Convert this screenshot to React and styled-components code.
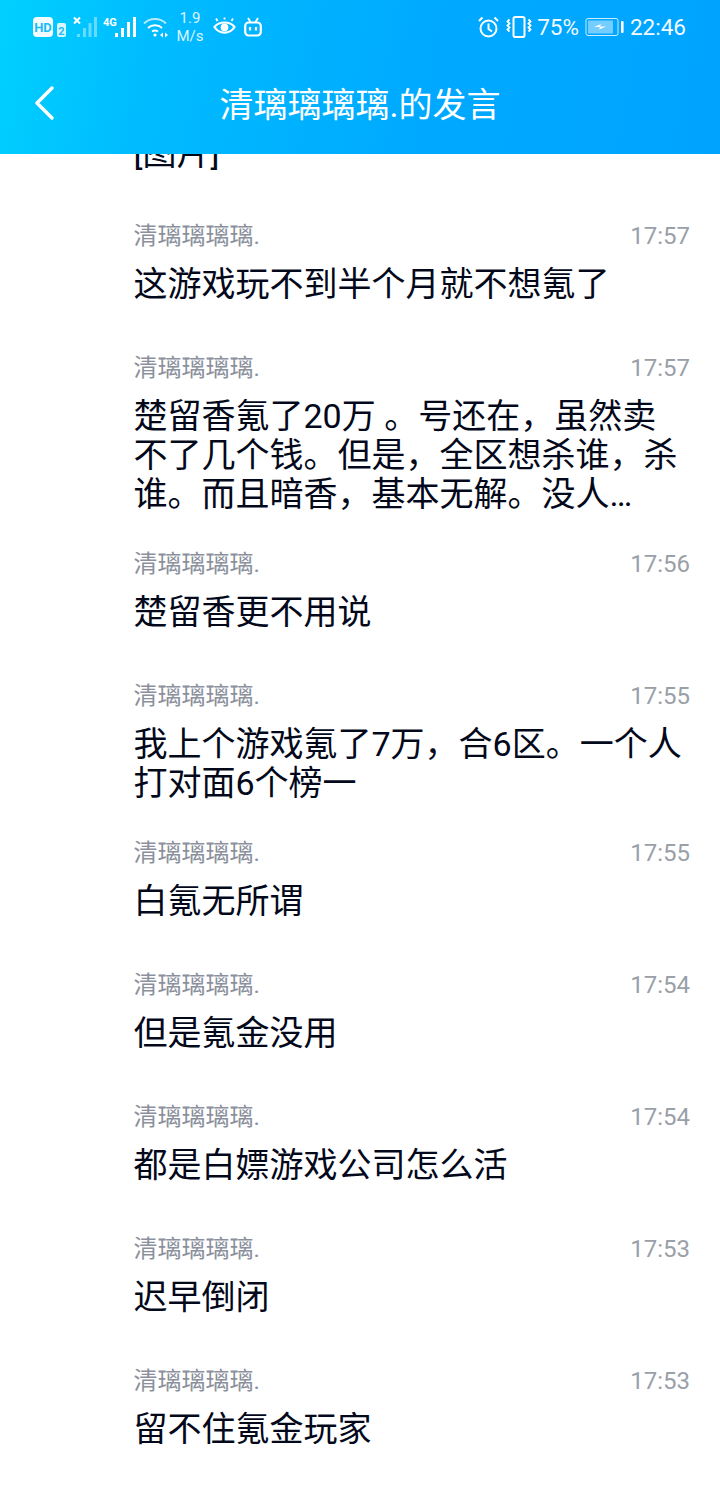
import React from 'react';
import styled, { createGlobalStyle } from 'styled-components';

const Global = createGlobalStyle`
  html, body { margin: 0; padding: 0; background: #fff; }
  body { font-family: "Roboto", "Noto Sans CJK SC", sans-serif; }
`

const Page = styled.div`
  width: 720px;
  height: 1493px;
  display: flex;
  flex-direction: column;
  overflow: hidden;
  background: #fff;
`

const Header = styled.header`
  flex: none;
  height: 154px;
  background: linear-gradient(100deg, #00d0ff 0%, #00bbff 22%, #00a9ff 60%, #00a4ff 100%);
  color: #fff;
`

const StatusBar = styled.div`
  height: 54px;
  padding: 0 34px 0 33px;
  display: flex;
  align-items: center;
  justify-content: space-between;
`

const StatusGroup = styled.div`
  display: flex;
  align-items: center;
`

const Speed = styled.div`
  width: 28px;
  margin: 0 9px 0 8px;
  font-size: 15px;
  line-height: 18px;
  text-align: center;
  opacity: .85;
`

const StatusText = styled.span`
  font-size: 22.5px;
  line-height: 28px;
  opacity: .95;
`

const NavBar = styled.div`
  height: 100px;
  display: grid;
  grid-template-columns: 1fr auto 1fr;
  align-items: center;
  padding: 0 33px;
`

const Title = styled.h1`
  margin: 2px 0 0;
  font-family: "Roboto", "Noto Sans CJK SC", sans-serif;
  font-size: 34px;
  font-weight: 400;
  line-height: 44px;
`

const List = styled.main`
  flex: 1;
  min-height: 0;
  display: flex;
  flex-direction: column;
  justify-content: flex-end;
  overflow: hidden;
  padding: 0 30px 5px 133.5px;
`

const Item = styled.article`
  flex: none;
  min-height: ${p => (p.$clipped ? 0 : 132)}px;
  box-sizing: border-box;
  padding: 5px 0 ${p => (p.$clipped ? 38 : 25)}px;
`

const Meta = styled.div`
  height: 34px;
  display: flex;
  align-items: center;
  justify-content: space-between;
`

const Name = styled.span`
  font-size: 24px;
  color: #8b909c;
`

const Time = styled.time`
  font-size: 24px;
  color: #9aa0a8;
  padding-top: 5px;
`

const Body = styled.p`
  margin: 15px 0 0;
  max-width: 550px;
  font-size: 34px;
  line-height: 39px;
  color: #03081a;
`

const messages = [
  { text: '[图片]' },
  { time: '17:57', text: '这游戏玩不到半个月就不想氪了' },
  { time: '17:57', text: '楚留香氪了20万 。号还在，虽然卖不了几个钱。但是，全区想杀谁，杀谁。而且暗香，基本无解。没人…' },
  { time: '17:56', text: '楚留香更不用说' },
  { time: '17:55', text: '我上个游戏氪了7万，合6区。一个人打对面6个榜一' },
  { time: '17:55', text: '白氪无所谓' },
  { time: '17:54', text: '但是氪金没用' },
  { time: '17:54', text: '都是白嫖游戏公司怎么活' },
  { time: '17:53', text: '迟早倒闭' },
  { time: '17:53', text: '留不住氪金玩家' },
]

const HdIcon = () => (
  <svg width="33" height="22" viewBox="0 0 33 22">
    <rect x="0" y="1" width="20" height="20" rx="4" fill="#fff" opacity=".95" />
    <text x="10" y="16" textAnchor="middle" fontSize="13" fontWeight="700" fill="#1cbcf8" fontFamily="Roboto">HD</text>
    <rect x="24" y="7" width="9" height="14" rx="2" fill="#fff" opacity=".85" />
    <text x="28.5" y="18.5" textAnchor="middle" fontSize="11" fontWeight="700" fill="#1cbcf8" fontFamily="Roboto">2</text>
  </svg>
)

const NoSignalIcon = () => (
  <svg width="24" height="22" viewBox="0 0 24 22">
    <path d="M1 1.5l6 6M7 1.5l-6 6" stroke="#fff" strokeWidth="2" />
    <g fill="#fff" opacity=".4">
      <rect x="4" y="18" width="3" height="3" />
      <rect x="10" y="12" width="3" height="9" />
      <rect x="15.5" y="7" width="3" height="14" />
      <rect x="21" y="1" width="3" height="20" />
    </g>
  </svg>
)

const SignalIcon = () => (
  <svg width="34" height="22" viewBox="0 0 34 22" fill="#fff">
    <text x="0" y="10" fontSize="11" fontWeight="700" fontFamily="Roboto">4G</text>
    <rect x="12" y="17" width="3" height="4" />
    <rect x="18" y="12" width="3" height="9" />
    <rect x="24" y="6" width="3" height="15" />
    <rect x="30" y="1" width="3" height="20" />
  </svg>
)

const WifiIcon = () => (
  <svg width="25" height="22" viewBox="0 0 25 22" fill="none" stroke="#fff" strokeWidth="2">
    <path d="M1 7.5C7 1.5 17 1.5 23 7.5" opacity=".7" />
    <path d="M5 12c4-3.6 10-3.6 14 0" />
    <path d="M9 15.5c2-1.4 4-1.4 6 0" />
    <circle cx="12" cy="19" r="1.6" fill="#fff" stroke="none" />
    <path d="M17 19l3-2.5v5zM25 19l-3-2.5v5z" fill="#fff" stroke="none" />
  </svg>
)

const EyeIcon = () => (
  <svg width="23" height="20" viewBox="0 0 23 20" fill="none" stroke="#fff" strokeWidth="2.2">
    <path d="M1.5 10C6 4 17 4 21.5 10C17 17.5 6 17.5 1.5 10Z" />
    <circle cx="11.5" cy="10.4" r="3.8" fill="#fff" stroke="none" />
    <path d="M4.5 4L3 1.5M11.5 2.5V.5M18.5 4L20 1.5" strokeWidth="1.8" />
  </svg>
)

const TvIcon = () => (
  <svg width="18" height="20" viewBox="0 0 18 20" fill="none" stroke="#fff" strokeWidth="2.2">
    <rect x="1.2" y="5.5" width="15.6" height="13" rx="3.5" />
    <path d="M4 1l2.5 4M14 1l-2.5 4" strokeWidth="1.8" />
    <path d="M6 10v3.5M12 10v3.5" />
  </svg>
)

const AlarmIcon = () => (
  <svg width="21" height="22" viewBox="0 0 21 22" fill="none" stroke="#fff" strokeWidth="2">
    <circle cx="10.5" cy="12.5" r="8" />
    <path d="M10.5 7.5v5.5l3.5 2.5" />
    <path d="M1 5l3.5-3.5M20 5l-3.5-3.5" />
  </svg>
)

const VibrateIcon = () => (
  <svg width="26" height="22" viewBox="0 0 26 22" fill="none" stroke="#fff" strokeWidth="2">
    <rect x="7.5" y="1" width="11" height="20" rx="1.8" />
    <path d="M3.5 3.5l-2 2 2 2-2 2 2 2-2 2 2 2M22.5 3.5l2 2-2 2 2 2-2 2 2 2-2 2" strokeWidth="1.8" />
  </svg>
)

const BatteryIcon = () => (
  <svg width="39" height="20" viewBox="0 0 39 20" fill="none">
    <rect x="1" y="1.5" width="32" height="17" rx="2" stroke="#fff" strokeWidth="1" opacity=".8" />
    <rect x="3" y="3.5" width="25" height="13" fill="#fff" opacity=".45" />
    <path d="M9 10l7-3-1 2.5h6l-7 3 1-2.5z" fill="#fff" />
    <rect x="36" y="4" width="2.6" height="12" rx="1" fill="#fff" />
  </svg>
)

const BackIcon = () => (
  <svg width="22" height="36" viewBox="0 0 22 36" fill="none" stroke="#fff" strokeWidth="3.4" strokeLinecap="round" strokeLinejoin="round">
    <path d="M19 2L4 17l15 15" />
  </svg>
)

const Gap = styled.span`
  display: inline-block;
  width: ${p => p.$w}px;
`

const App = () => (
  <Page>
    <Global />
    <Header>
      <StatusBar>
        <StatusGroup>
          <HdIcon />
          <Gap $w={7} />
          <NoSignalIcon />
          <Gap $w={6} />
          <SignalIcon />
          <Gap $w={6} />
          <WifiIcon />
          <Speed>1.9<br />M/s</Speed>
          <EyeIcon />
          <Gap $w={8} />
          <TvIcon />
        </StatusGroup>
        <StatusGroup>
          <AlarmIcon />
          <Gap $w={7} />
          <VibrateIcon />
          <Gap $w={5} />
          <StatusText>75%</StatusText>
          <Gap $w={6} />
          <BatteryIcon />
          <Gap $w={6} />
          <StatusText>22:46</StatusText>
        </StatusGroup>
      </StatusBar>
      <NavBar>
        <BackIcon />
        <Title>清璃璃璃璃.的发言</Title>
      </NavBar>
    </Header>
    <List>
      {messages.map((m, i) => (
        <Item key={i} $clipped={!m.time}>
          {m.time && (
            <Meta>
              <Name>清璃璃璃璃.</Name>
              <Time>{m.time}</Time>
            </Meta>
          )}
          <Body>{m.text}</Body>
        </Item>
      ))}
    </List>
  </Page>
);

export default App;
